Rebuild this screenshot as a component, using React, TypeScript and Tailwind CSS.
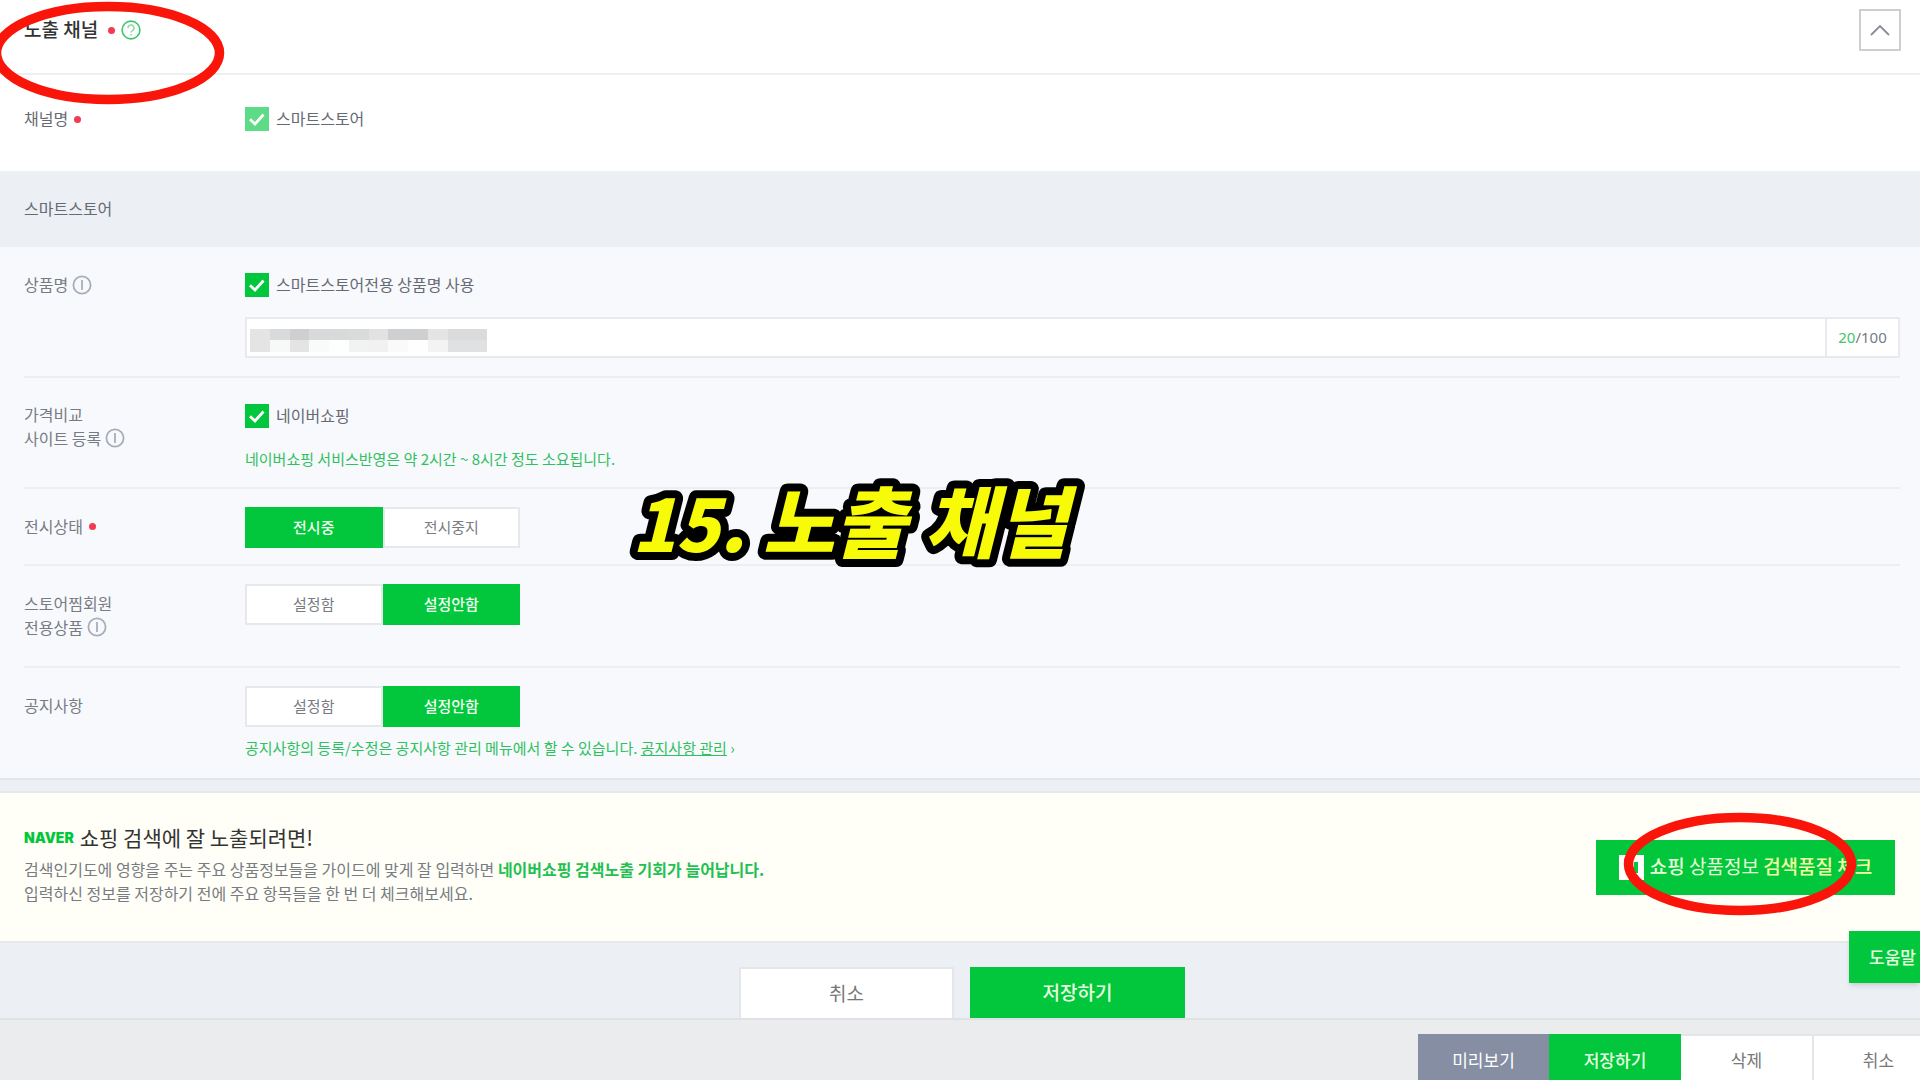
import { useState, type ReactNode } from "react";

function CheckBox({ id, label, pale }: { id: string; label: string; pale?: boolean }) {
  return (
    <div className="flex h-6 items-center gap-[7px]">
      <span className="relative block size-6">
        <input
          id={id}
          type="checkbox"
          defaultChecked
          disabled={pale}
          className={
            pale
              ? "block size-6 appearance-none bg-[#5edb86]"
              : "block size-6 appearance-none bg-[#02c73c]"
          }
        />
        <svg viewBox="0 0 24 24" className="pointer-events-none absolute inset-0 size-6" fill="none" stroke="#fff" strokeWidth="2.8">
          <path d="M5 12.2 10 17 18.5 7.5" />
        </svg>
      </span>
      <label htmlFor={id} className="pb-0.5 text-[#666a73]">
        {label}
      </label>
    </div>
  );
}

function Info() {
  return (
    <svg viewBox="0 0 20 20" className="size-5 shrink-0" fill="none" stroke="#a9adb8" strokeWidth="1.8" role="img" aria-label="안내">
      <circle cx="10" cy="10" r="8.6" />
      <path d="M10 5v10" />
    </svg>
  );
}

function Required() {
  return <span className="block size-[7px] shrink-0 rounded-full bg-[#f23a50]" />;
}

function Toggle({ name, options, initial }: { name: string; options: string[]; initial: number }) {
  const [active, setActive] = useState(initial);
  return (
    <div role="group" aria-label={name} className="grid h-[41px] w-[275px] grid-cols-2 text-[15px]">
      {options.map((option, i) => (
        <button
          key={option}
          type="button"
          aria-pressed={i === active}
          onClick={() => setActive(i)}
          className={
            i === active
              ? "bg-[#02c73c] pb-px font-medium text-[#f0fff0]"
              : "border-2 border-[#e6e8ec] bg-white pb-px text-[#777b83]"
          }
        >
          {option}
        </button>
      ))}
    </div>
  );
}

function Row({ label, height, last, children }: { label: ReactNode; height: string; last?: boolean; children: ReactNode }) {
  return (
    <div className="pr-5 pl-6">
      <div className={`flex ${height} ${last ? "" : "border-b-2 border-[#eceef2]"}`}>
        <div className="w-[221px] shrink-0 leading-6 text-[#777b83]">{label}</div>
        <div className="min-w-0 flex-1">{children}</div>
      </div>
    </div>
  );
}

function Ring({ className }: { className: string }) {
  return (
    <svg viewBox="0 0 234 104" className={`pointer-events-none absolute h-[104px] w-[234px] ${className}`} fill="none" stroke="#fa150a" strokeWidth="9.5">
      <ellipse cx="117" cy="52" rx="111.5" ry="46.5" />
    </svg>
  );
}

const mosaicTop = ["#e4e4e4", "#d9dadb", "#cfcfd1", "#d7d9da", "#d7d9da", "#d9dada", "#e2e1e4", "#cecfd0", "#cecfd0", "#e4e4e4", "#dbdbdb", "#dbdbdb"];
const mosaicBottom = ["#e4e4e4", "#f7f8f8", "#e4e4e4", "#f9fafa", "#fefefe", "#f1f2f2", "#f1f1f2", "#fafafa", "#fefefe", "#f3f3f3", "#e0e1e2", "#e0e1e2"];

export default function App() {
  return (
    <div className="relative flex min-h-screen flex-col overflow-hidden bg-[#eceff4] font-['Noto_Sans_CJK_KR','Noto_Sans',sans-serif] text-base">
      <header className="flex h-[75px] justify-between border-b-2 border-[#eeeff1] bg-white pt-[9px] pr-[19px] pl-6">
        <div className="flex h-[42px] items-center">
          <h1 className="pb-0.5 text-[19px] font-medium text-[#333]">노출 채널</h1>
          <span className="ml-2.5">
            <Required />
          </span>
          <svg viewBox="0 0 20 20" className="ml-1.5 size-5" fill="none" stroke="#3fc56d" strokeWidth="1.6" role="img" aria-label="도움말">
            <circle cx="10" cy="10" r="8.9" />
            <path d="M7 8a3 3 0 1 1 4.4 2.6c-1 .5-1.4 1-1.4 2M10 14v1.4" stroke="#8fdcaa" />
          </svg>
        </div>
        <button type="button" aria-label="접기" className="flex size-[42px] items-center justify-center border-2 border-[#cdced2] bg-white">
          <svg viewBox="0 0 20 12" className="h-3 w-5" fill="none" stroke="#8a8d98" strokeWidth="1.8">
            <path d="M1 11 10 2l9 9" />
          </svg>
        </button>
      </header>

      <div className="flex h-24 bg-white px-6 pt-8">
        <div className="flex h-6 w-[221px] shrink-0 items-center gap-1.5 text-[#666a73]">
          <span className="pb-0.5">채널명</span> <Required />
        </div>
        <CheckBox id="channel" label="스마트스토어" pale />
      </div>

      <h2 className="flex h-[76px] items-center px-6 pb-0.5 text-[#666a73]">스마트스토어</h2>

      <main className="border-b-2 border-[#e2e5ea] bg-[#f8f9fd]">
        <Row
          height="h-[131px] pt-[26px]"
          label={
            <span className="flex h-6 items-center gap-1">
              <span className="pb-0.5">상품명</span> <Info />
            </span>
          }
        >
          <CheckBox id="own-name" label="스마트스토어전용 상품명 사용" />
          <div className="mt-5 flex h-[41px] border-2 border-[#e8eaee] bg-white">
            <div className="relative flex-1">
              <input type="text" aria-label="상품명" className="block size-full bg-transparent px-3 outline-none" />
              <div className="pointer-events-none absolute top-2.5 left-[3px] grid w-[237px] grid-cols-12">
                {mosaicTop.map((c, i) => (
                  <span key={i} className="h-[11px]" style={{ backgroundColor: c }} />
                ))}
                {mosaicBottom.map((c, i) => (
                  <span key={i} className="h-3" style={{ backgroundColor: c }} />
                ))}
              </div>
            </div>
            <div className="flex w-[73px] items-center justify-center border-l-2 border-[#e8eaee] font-['Noto_Sans'] text-[15px] text-[#777b83]">
              <span className="text-[#3fc56d]">20</span>/100
            </div>
          </div>
        </Row>

        <Row
          height="h-[111px] pt-[26px]"
          label={
            <div className="-mt-0.5">
              가격비교
              <span className="flex items-center gap-1">
                사이트 등록 <Info />
              </span>
            </div>
          }
        >
          <CheckBox id="naver-shopping" label="네이버쇼핑" />
          <p className="mt-[19px] text-[15px] leading-6 text-[#2fc05f]">네이버쇼핑 서비스반영은 약 2시간 ~ 8시간 정도 소요됩니다.</p>
        </Row>

        <Row
          height="h-[77px] pt-[18px]"
          label={
            <span className="flex h-[39px] items-center gap-1.5">
              <span className="pb-0.5">전시상태</span> <Required />
            </span>
          }
        >
          <Toggle name="전시상태" options={["전시중", "전시중지"]} initial={0} />
        </Row>

        <Row
          height="h-[102px] pt-[18px]"
          label={
            <div className="pt-[7px]">
              스토어찜회원
              <span className="flex items-center gap-1">
                전용상품 <Info />
              </span>
            </div>
          }
        >
          <Toggle name="스토어찜회원 전용상품" options={["설정함", "설정안함"]} initial={1} />
        </Row>

        <Row height="h-[110px] pt-[18px]" last label={<div className="pt-[7px]">공지사항</div>}>
          <Toggle name="공지사항" options={["설정함", "설정안함"]} initial={1} />
          <p className="mt-[9px] text-[15px] leading-6 text-[#2fc05f]">
            공지사항의 등록/수정은 공지사항 관리 메뉴에서 할 수 있습니다.{" "}
            <a href="#notice" className="underline">
              공지사항 관리
            </a>{" "}
            ›
          </p>
        </Row>
      </main>

      <section className="mt-[11px] flex h-[152px] items-center justify-between border-y-2 border-[#e6e8ea] bg-[#fffff7] pr-[25px] pl-6">
        <div className="pb-1.5 leading-6 text-[#777b83]">
          <h2 className="mb-1 flex items-center gap-1.5 text-[21px] leading-7 text-[#333]">
            <span className="font-['Inter'] text-sm font-black text-[#02c73c]">NAVER</span>
            <span className="pb-0.5">쇼핑 검색에 잘 노출되려면!</span>
          </h2>
          <p>
            검색인기도에 영향을 주는 주요 상품정보들을 가이드에 맞게 잘 입력하면{" "}
            <strong className="font-bold text-[#1fc152]">네이버쇼핑 검색노출 기회가 늘어납니다.</strong>
          </p>
          <p>입력하신 정보를 저장하기 전에 주요 항목들을 한 번 더 체크해보세요.</p>
        </div>
        <div className="relative">
          <button type="button" className="flex h-[55px] w-[299px] items-center justify-center gap-1.5 bg-[#02c73c] text-[19px] text-[#e6ffd9]">
            <svg viewBox="0 0 25 25" className="size-[25px]">
              <path d="M0 0h25v25H0z" fill="#fff" />
              <path d="M7 18V7h3l5 6V7h4v11h-4l-4-6v6z" fill="#02c73c" />
            </svg>
            <span className="pb-px">
              <b className="font-medium">쇼핑</b> 상품정보 <b className="font-medium text-[#f4ffa0]">검색품질 체크</b>
            </span>
          </button>
          <Ring className="-top-7 left-[27px]" />
        </div>
      </section>

      <div className="flex h-[75px] justify-center gap-4 pt-6 pl-1 text-[19px]">
        <button type="button" className="w-[215px] border-2 border-b-0 border-[#e4e6ea] bg-white text-[#777]">
          취소
        </button>
        <button type="button" className="w-[215px] bg-[#02c73c] font-medium text-[#e6ffe0]">
          저장하기
        </button>
      </div>

      <footer className="flex flex-1 justify-end border-t-2 border-[#dfe1e6] bg-[#ebecee] pt-3.5 text-[17px]">
        <div className="-mr-[23px] flex">
          <button type="button" className="w-[131px] bg-[#868ea3] pt-1.5 text-white">미리보기</button>
          <button type="button" className="w-[132px] bg-[#02c73c] pt-1.5 font-medium text-[#e6ffe0]">저장하기</button>
          <button type="button" className="w-[131px] border-t-2 border-[#e4e5e8] bg-white pt-1 text-[#777]">삭제</button>
          <button type="button" className="w-[131px] border-t-2 border-l-2 border-[#e4e5e8] bg-white pt-1 text-[#777]">취소</button>
        </div>
      </footer>

      <button type="button" className="absolute right-0 bottom-[97px] h-[52px] w-[71px] bg-[#02c73c] pl-4 text-[17px] font-medium whitespace-nowrap text-[#e6ffe0] shadow-md">
        도움말
      </button>

      <Ring className="top-px -left-[9px]" />

      <svg className="pointer-events-none absolute top-[440px] left-[600px] h-[160px] w-[540px] overflow-visible">
        <text
          x="32"
          y="112"
          className="fill-[#f7fb08] stroke-black stroke-[16px] text-[78px] font-black italic [paint-order:stroke_fill] [stroke-linejoin:round]"
        >
          <tspan className="text-[72px]">15.</tspan> 노출 채널
        </text>
      </svg>
    </div>
  );
}
